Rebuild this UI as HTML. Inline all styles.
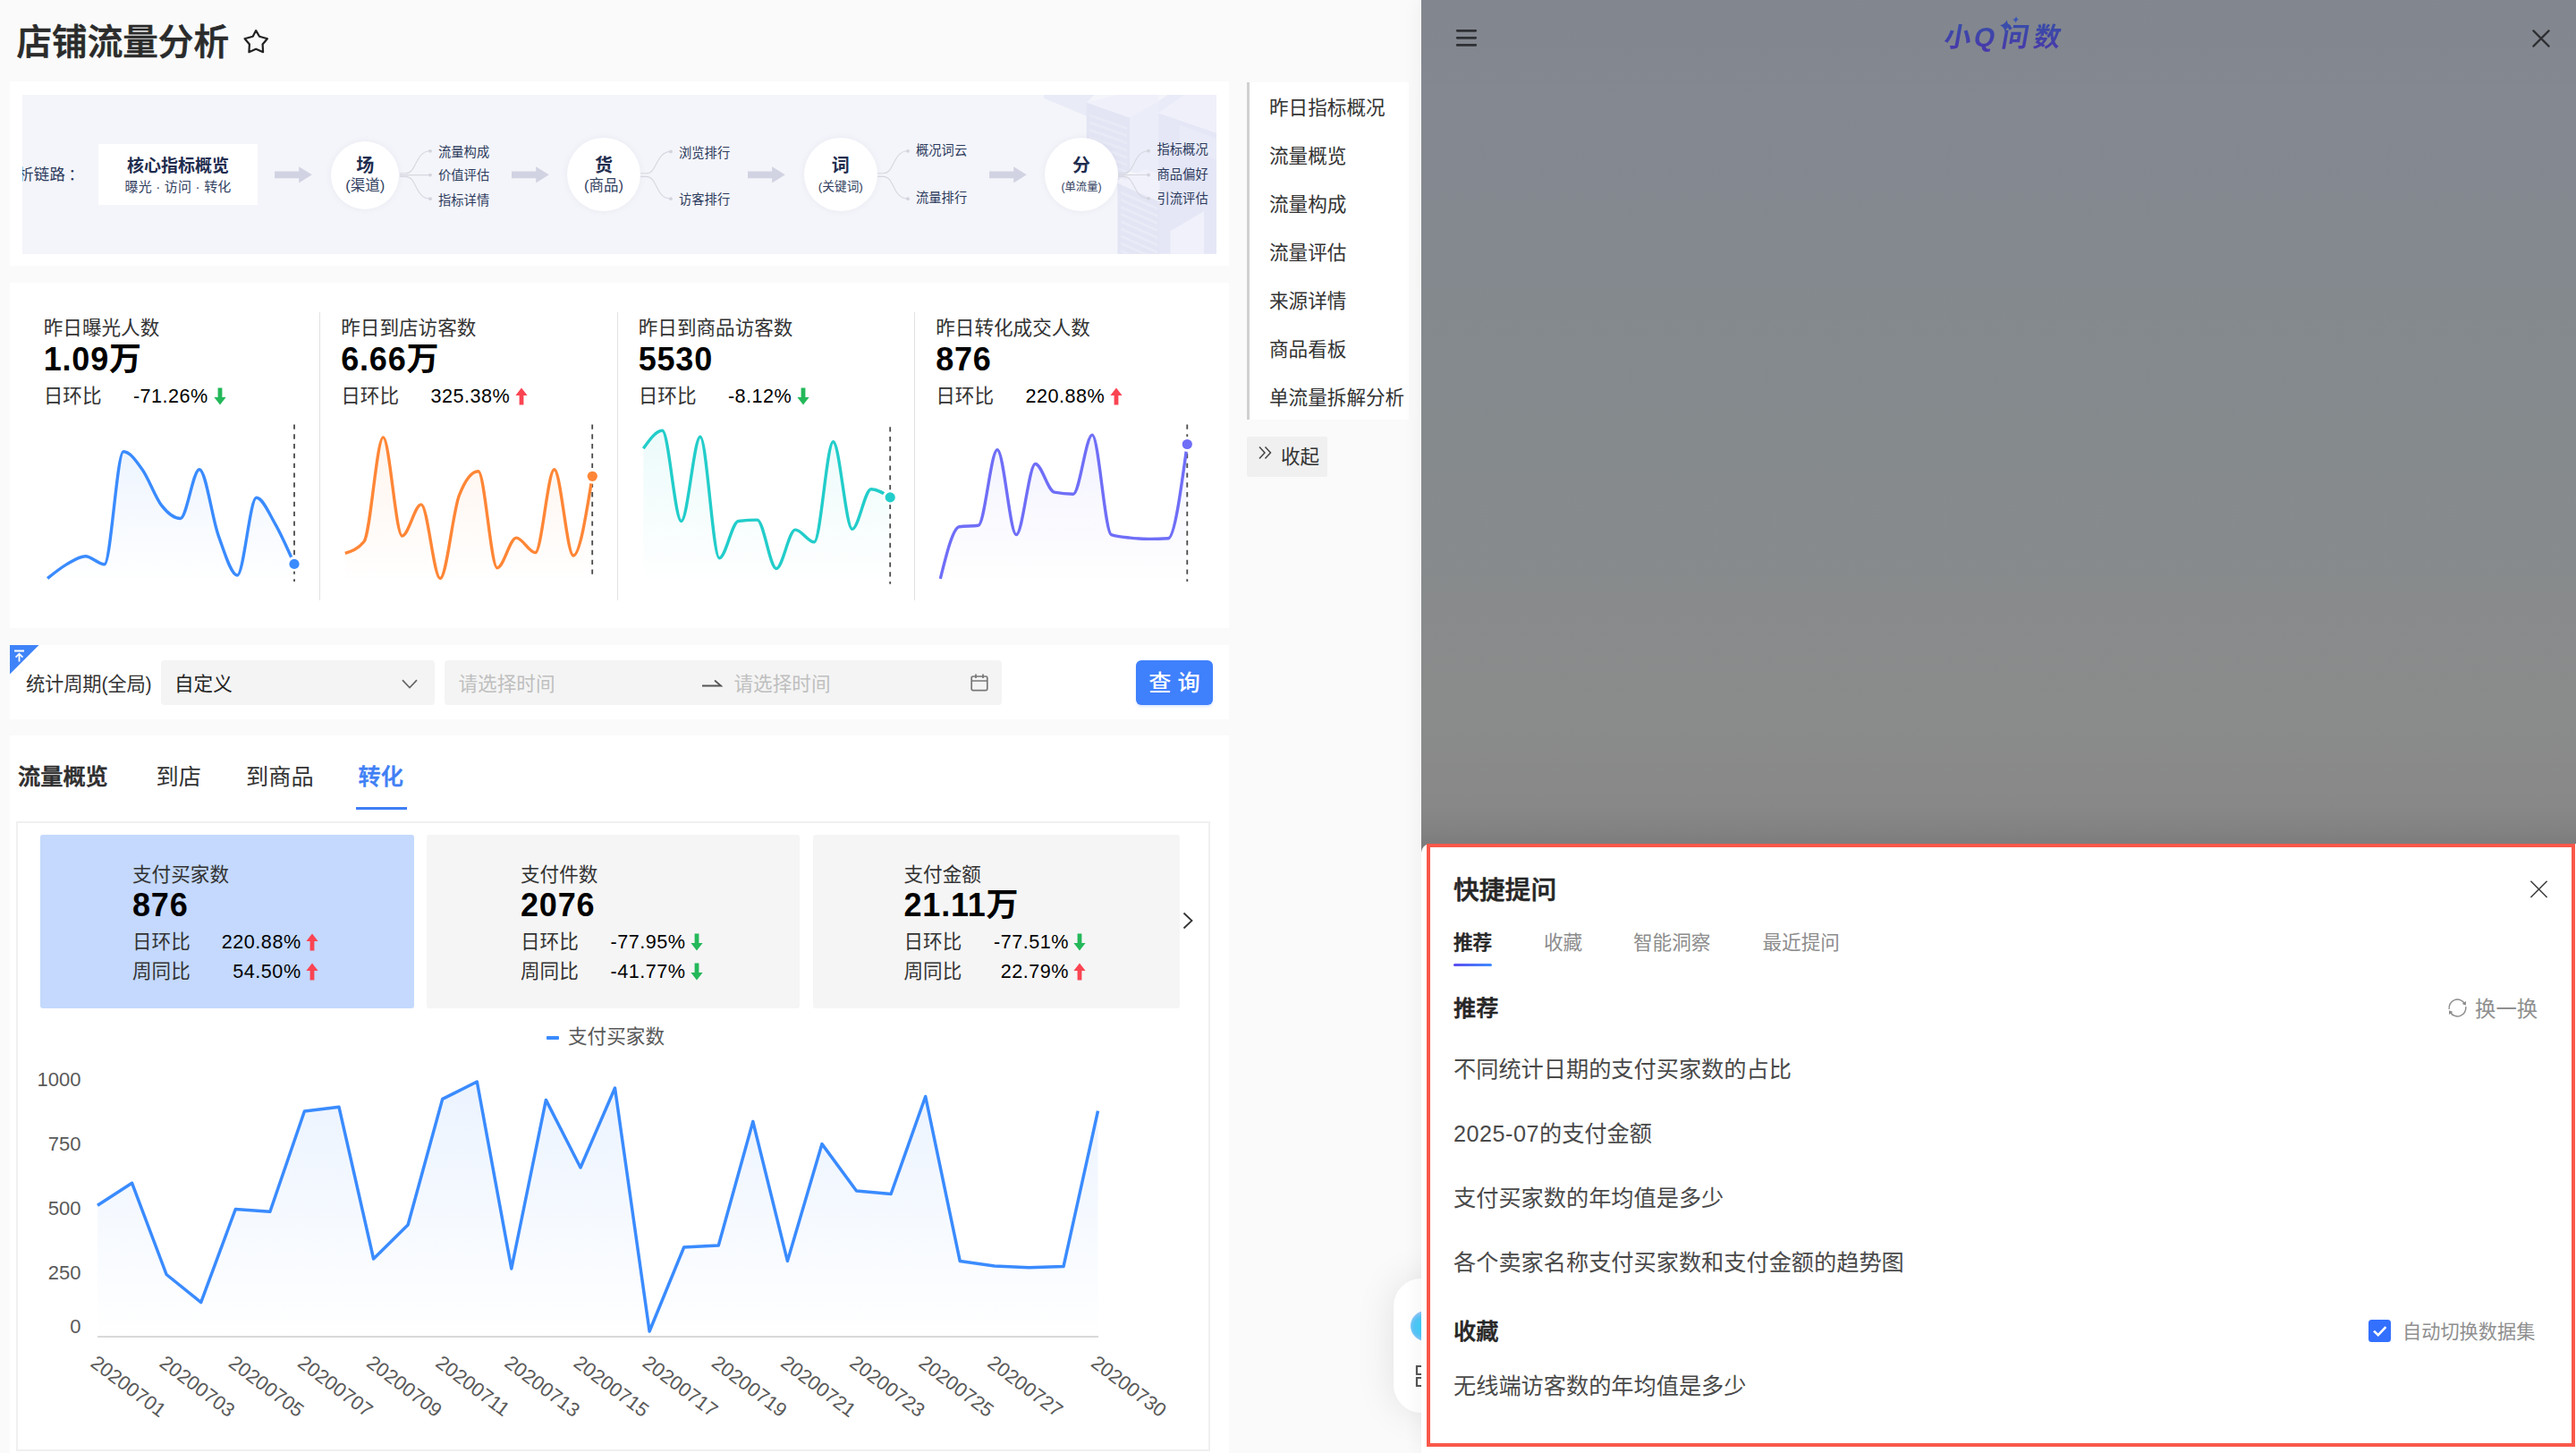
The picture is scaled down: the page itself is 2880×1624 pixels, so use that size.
<!DOCTYPE html>
<html lang="zh-CN"><head><meta charset="utf-8"><title>店铺流量分析</title>
<style>
*{box-sizing:border-box;margin:0;padding:0}
html,body{width:2880px;height:1624px;overflow:hidden;background:#fafafa}
body{position:relative;font-family:"Liberation Sans","Noto Sans CJK SC",sans-serif;color:#333;font-size:21.6px}
.abs,.card,.kpi,.mc,.bc,.ba,.bb,.bl{position:absolute}
.card{background:#fff}
h1{position:absolute;left:18.5px;top:19px;font-size:39.6px;font-weight:500;-webkit-text-stroke:0.7px #2b2b2b;color:#2b2b2b;line-height:56px;letter-spacing:0px;white-space:nowrap}
/* banner */
#banner{position:absolute;left:25px;top:106px;width:1335px;height:177.5px;background:#f4f5fa;overflow:hidden}
#banner > *{position:absolute}
.bt0{left:-57.5px;top:77px;font-size:17.4px;color:#2c3a5c;line-height:24px;white-space:nowrap;letter-spacing:0.2px}
.bbox{left:85px;top:55px;width:178px;height:68px;background:#fff;text-align:center;color:#1f2d4f}
.bbox b{display:block;font-size:19px;line-height:24px;margin-top:12.5px;font-weight:700}
.bbox span{display:block;font-size:15px;line-height:20px;margin-top:1px;color:#33415f;letter-spacing:0.2px}
.ba{top:79.7px}
.bc{border-radius:50%;background:#fff;box-shadow:0 0 7px rgba(120,125,170,0.09)}
.bct{width:100px;text-align:center;color:#1f2d4f;white-space:nowrap}
.bct b{display:block;font-size:20px;line-height:26px;font-weight:700}
.bct span{display:block;line-height:22px;color:#33415f}
.bl{font-size:14.3px;line-height:22px;color:#2c3a5c;white-space:nowrap}
/* kpi */
.kpi{top:349px;width:320px;margin-left:-0.8px}
.kt{font-size:21.6px;line-height:30px;color:#333;margin-top:3px}
.kv{font-size:36px;line-height:36px;font-weight:700;color:#000;margin-top:2.2px;letter-spacing:0.8px}
.kr{margin-top:8px;line-height:30px;white-space:nowrap;position:relative;height:30px}
.kl{color:#333}
.kp{position:absolute;left:100.2px;color:#000;letter-spacing:0.5px}
.kp .ar{display:inline-block;vertical-align:top;margin-left:6px;margin-top:5px}
.vd{position:absolute;top:349px;width:1.3px;height:322px;background:#e2e2e2}
/* filter */
.sel{position:absolute;top:738px;height:50px;background:#f4f4f4;border-radius:4px}
/* tabs */
.tab{position:absolute;top:848.6px;font-size:25.2px;line-height:38px;color:#333;white-space:nowrap}
/* metric cards */
.mc{top:933px;height:194px;border-radius:3px}
.mi{position:absolute;top:0;width:230px}
.mt{font-size:21.6px;line-height:30px;margin-top:30px;color:#333}
.mv{font-size:36px;line-height:36px;font-weight:700;color:#000;margin-top:1px;letter-spacing:0.8px}
.mr{position:relative;height:32.4px;line-height:32.4px;white-space:nowrap}
.mv + .mr{margin-top:7.3px}
.ml{color:#333}
.mp{position:absolute;left:0;text-align:right;color:#000;letter-spacing:0.5px}
.ma{position:absolute;top:6px;line-height:0}
.ax{font-size:22px;fill:#595959;font-family:"Liberation Sans",sans-serif}
/* nav */
.nav{position:absolute;left:1397px;top:92px;width:178px;height:377px;background:#fff}
.nav div{height:54px;line-height:54px;padding-left:22px;position:relative;top:2.3px;font-size:21.6px;color:#333;white-space:nowrap}
/* right */
#rp{position:absolute;left:1589px;top:0;width:1291px;height:1624px;box-shadow:-6px 0 16px rgba(0,0,0,0.035);background:linear-gradient(180deg,#82868e 0px,#838891 110px,#858a8d 480px,#8a8b8b 800px,#888889 900px,#818182 932px,#7c7c7d 943px,#7c7c7d 100%);}
#sheet{position:absolute;left:1589px;top:943px;width:1291px;height:681px;background:#fff;border-radius:10px 0 0 0}
#red{position:absolute;left:1595px;top:942.6px;width:1284px;height:674.4px;border:4.3px solid #f9584a}
.st{position:absolute;white-space:nowrap}
.li{position:absolute;left:1625px;font-size:25.2px;line-height:36px;color:#4a4a4a;white-space:nowrap}
</style></head><body>

<h1>店铺流量分析</h1>
<svg class="abs" style="left:271px;top:30px" width="32" height="32" viewBox="0 0 32 32"><path d="M15.2 4.1 L19 10.8 L27.9 13.2 L22.6 19.5 L23.1 28.2 L15.2 24.8 L7.4 28.2 L7.9 19.5 L2.6 13.2 L11.7 10.8 Z" fill="none" stroke="#222" stroke-width="2.2" stroke-linejoin="round"/></svg>

<!-- banner card -->
<div class="card" style="left:11px;top:91px;width:1363px;height:206px"></div>
<div id="banner">
<svg style="left:1140px;top:0" width="195" height="178" viewBox="0 0 195 178"><polygon points="2.0,-0.1 58.2,-0.1 50.4,8.4 50.4,24.1 2.0,3.8" fill="#e9ebf7"/><polygon points="49.7,8.4 98.1,25.4 98.1,85.6 84.4,96.0 49.7,85.6" fill="#e3e5f4"/><polygon points="50.4,8.4 84.4,-0.1 130.2,-0.1 130.2,7.1 98.1,25.4" fill="#eff0fa"/><polygon points="98.1,25.4 130.2,7.1 130.2,93.4 98.1,85.6" fill="#ebedf8"/><polygon points="130.2,20.2 194.9,42.4 194.9,177.8 130.2,177.8" fill="#e5e7f6"/><polygon points="130.2,20.2 159.0,-0.1 194.9,-0.1 194.9,42.4" fill="#eff0fa"/><polygon points="130.2,7.1 140.7,-0.1 159.0,-0.1 130.2,20.2" fill="#e9ebf8"/><polygon points="84.4,98.6 131.5,119.6 131.5,177.8 84.4,177.8" fill="#e3e5f4"/><polygon points="84.4,98.6 115.8,82.9 131.5,89.5 131.5,119.6" fill="#f0f1fa"/><polygon points="143.3,152.3 181.2,130.0 181.2,177.8 143.3,177.8" fill="#f0f1fa"/><polygon points="153.7,33.2 194.9,48.9 194.9,72.5 153.7,56.8" fill="#e9ebf8"/><g opacity="0.9"><polygon points="88.3,107.8 128.9,125.8 128.9,128.7 88.3,110.7" fill="#eaecf8"/><polygon points="88.3,115.9 128.9,134.0 128.9,136.8 88.3,118.8" fill="#eaecf8"/><polygon points="88.3,124.0 128.9,142.1 128.9,144.9 88.3,126.9" fill="#eaecf8"/><polygon points="88.3,132.1 128.9,150.2 128.9,153.1 88.3,135.0" fill="#eaecf8"/><polygon points="88.3,140.2 128.9,158.3 128.9,161.2 88.3,143.1" fill="#eaecf8"/><polygon points="88.3,148.3 128.9,166.4 128.9,169.3 88.3,151.2" fill="#eaecf8"/><polygon points="88.3,156.5 128.9,174.5 128.9,177.4 88.3,159.3" fill="#eaecf8"/><polygon points="88.3,164.6 128.9,182.6 128.9,185.5 88.3,167.4" fill="#eaecf8"/><polygon points="88.3,172.7 128.9,190.7 128.9,193.6 88.3,175.6" fill="#eaecf8"/><polygon points="53.0,21.5 94.9,36.1 94.9,39.0 53.0,24.3" fill="#e9ebf7"/><polygon points="53.0,29.6 94.9,44.2 94.9,47.1 53.0,32.5" fill="#e9ebf7"/><polygon points="53.0,37.7 94.9,52.3 94.9,55.2 53.0,40.6" fill="#e9ebf7"/><polygon points="53.0,45.8 94.9,60.4 94.9,63.3 53.0,48.7" fill="#e9ebf7"/><polygon points="53.0,53.9 94.9,68.6 94.9,71.4 53.0,56.8" fill="#e9ebf7"/><polygon points="53.0,62.0 94.9,76.7 94.9,79.5 53.0,64.9" fill="#e9ebf7"/><polygon points="53.0,70.1 94.9,84.8 94.9,87.7 53.0,73.0" fill="#e9ebf7"/><polygon points="53.0,78.2 94.9,92.9 94.9,95.8 53.0,81.1" fill="#e9ebf7"/></g></svg>
<div class="bt0">流量分析链路<span style="margin-left:3.4px">：</span></div>
<div class="bbox"><b>核心指标概览</b><span>曝光 · 访问 · 转化</span></div>
<svg class="ba" style="left:282px" width="42" height="19" viewBox="0 0 42 19"><path d="M0 5.4 H27.2 V0.2 L41.8 9.3 L27.2 18.4 V13.2 H0 Z" fill="#d2d3e2"/></svg>
<div class="bc" style="left:345.0px;top:52.1px;width:76.4px;height:76.4px"></div><div class="bct" style="left:333.2px;top:66.2px"><b>场</b></div><div class="bct" style="left:333.2px;top:90.4px;font-size:16.5px"><span>(渠道)</span></div>
<svg class="bb" style="left:422px;top:44px" width="40" height="92" viewBox="0 0 40 92"><path d="M0 43.800000000000004 H6.8 C19.0 43.800000000000004 17.0 18.80000000000001 34 18.80000000000001" fill="none" stroke="#d6d7df" stroke-width="1.1"/><circle cx="34" cy="18.80000000000001" r="1.9" fill="#d3d4dd"/><path d="M0 45.6 H6.8 C19.0 45.6 17.0 45.599999999999994 34 45.599999999999994" fill="none" stroke="#d6d7df" stroke-width="1.1"/><circle cx="34" cy="45.599999999999994" r="1.9" fill="#d3d4dd"/><path d="M0 47.4 H6.8 C19.0 47.4 17.0 72.19999999999999 34 72.19999999999999" fill="none" stroke="#d6d7df" stroke-width="1.1"/><circle cx="34" cy="72.19999999999999" r="1.9" fill="#d3d4dd"/></svg>
<div class="bl" style="left:465px;top:52.5px">流量构成</div><div class="bl" style="left:465px;top:79px">价值评估</div><div class="bl" style="left:465px;top:106.5px">指标详情</div>
<svg class="ba" style="left:547px" width="42" height="19" viewBox="0 0 42 19"><path d="M0 5.4 H27.2 V0.2 L41.8 9.3 L27.2 18.4 V13.2 H0 Z" fill="#d2d3e2"/></svg>
<div class="bc" style="left:609.2px;top:48.2px;width:81.6px;height:81.6px"></div><div class="bct" style="left:600.0px;top:66.2px"><b>货</b></div><div class="bct" style="left:600.0px;top:90.4px;font-size:16.5px"><span>(商品)</span></div>
<svg class="bb" style="left:691px;top:44px" width="40" height="92" viewBox="0 0 40 92"><path d="M0 43.800000000000004 H6.8 C19.0 43.800000000000004 17.0 19.400000000000006 34 19.400000000000006" fill="none" stroke="#d6d7df" stroke-width="1.1"/><circle cx="34" cy="19.400000000000006" r="1.9" fill="#d3d4dd"/><path d="M0 47.4 H6.8 C19.0 47.4 17.0 72.19999999999999 34 72.19999999999999" fill="none" stroke="#d6d7df" stroke-width="1.1"/><circle cx="34" cy="72.19999999999999" r="1.9" fill="#d3d4dd"/></svg>
<div class="bl" style="left:734px;top:53.80000000000001px">浏览排行</div><div class="bl" style="left:734px;top:105.69999999999999px">访客排行</div>
<svg class="ba" style="left:811px" width="42" height="19" viewBox="0 0 42 19"><path d="M0 5.4 H27.2 V0.2 L41.8 9.3 L27.2 18.4 V13.2 H0 Z" fill="#d2d3e2"/></svg>
<div class="bc" style="left:874.0px;top:48.2px;width:81.6px;height:81.6px"></div><div class="bct" style="left:864.8px;top:66.2px"><b>词</b></div><div class="bct" style="left:864.8px;top:92.4px;font-size:13.7px"><span>(关键词)</span></div>
<svg class="bb" style="left:956px;top:44px" width="40" height="92" viewBox="0 0 40 92"><path d="M0 43.800000000000004 H6.8 C19.0 43.800000000000004 17.0 18.80000000000001 34 18.80000000000001" fill="none" stroke="#d6d7df" stroke-width="1.1"/><circle cx="34" cy="18.80000000000001" r="1.9" fill="#d3d4dd"/><path d="M0 47.4 H6.8 C19.0 47.4 17.0 72.19999999999999 34 72.19999999999999" fill="none" stroke="#d6d7df" stroke-width="1.1"/><circle cx="34" cy="72.19999999999999" r="1.9" fill="#d3d4dd"/></svg>
<div class="bl" style="left:999px;top:50.5px">概况词云</div><div class="bl" style="left:999px;top:104.30000000000001px">流量排行</div>
<svg class="ba" style="left:1081px" width="42" height="19" viewBox="0 0 42 19"><path d="M0 5.4 H27.2 V0.2 L41.8 9.3 L27.2 18.4 V13.2 H0 Z" fill="#d2d3e2"/></svg>
<div class="bc" style="left:1143.2px;top:48.2px;width:81.6px;height:81.6px"></div><div class="bct" style="left:1134.0px;top:66.2px"><b>分</b></div><div class="bct" style="left:1134.0px;top:91.8px;font-size:12.3px"><span>(单流量)</span></div>
<svg class="bb" style="left:1225px;top:44px" width="40" height="92" viewBox="0 0 40 92"><path d="M0 43.800000000000004 H6.8 C19.0 43.800000000000004 17.0 18.69999999999999 34 18.69999999999999" fill="none" stroke="#d6d7df" stroke-width="1.1"/><circle cx="34" cy="18.69999999999999" r="1.9" fill="#d3d4dd"/><path d="M0 45.6 H6.8 C19.0 45.6 17.0 45.5 34 45.5" fill="none" stroke="#d6d7df" stroke-width="1.1"/><circle cx="34" cy="45.5" r="1.9" fill="#d3d4dd"/><path d="M0 47.4 H6.8 C19.0 47.4 17.0 71.80000000000001 34 71.80000000000001" fill="none" stroke="#d6d7df" stroke-width="1.1"/><circle cx="34" cy="71.80000000000001" r="1.9" fill="#d3d4dd"/></svg>
<div class="bl" style="left:1268.5px;top:50.400000000000006px">指标概况</div><div class="bl" style="left:1268.5px;top:77.9px">商品偏好</div><div class="bl" style="left:1268.5px;top:104.6px">引流评估</div>
</div>

<!-- kpi card -->
<div class="card" style="left:11px;top:316px;width:1363px;height:386px"></div>
<div class="kpi" style="left:49.5px"><div class="kt">昨日曝光人数</div><div class="kv">1.09万</div><div class="kr"><span class="kl">日环比</span><span class="kp">-71.26%<svg class="ar" width="14" height="20" viewBox="0 0 14 20"><path d="M7 19.5 L13.6 11 H9.4 V0.5 H4.6 V11 H0.4 Z" fill="#24b85a"/></svg></span></div></div>
<div class="kpi" style="left:382px"><div class="kt">昨日到店访客数</div><div class="kv">6.66万</div><div class="kr"><span class="kl">日环比</span><span class="kp">325.38%<svg class="ar" width="14" height="20" viewBox="0 0 14 20"><path d="M7 0.5 L13.6 9 H9.4 V19.5 H4.6 V9 H0.4 Z" fill="#fa4452"/></svg></span></div></div>
<div class="kpi" style="left:714.5px"><div class="kt">昨日到商品访客数</div><div class="kv">5530</div><div class="kr"><span class="kl">日环比</span><span class="kp">-8.12%<svg class="ar" width="14" height="20" viewBox="0 0 14 20"><path d="M7 19.5 L13.6 11 H9.4 V0.5 H4.6 V11 H0.4 Z" fill="#24b85a"/></svg></span></div></div>
<div class="kpi" style="left:1047px"><div class="kt">昨日转化成交人数</div><div class="kv">876</div><div class="kr"><span class="kl">日环比</span><span class="kp">220.88%<svg class="ar" width="14" height="20" viewBox="0 0 14 20"><path d="M7 0.5 L13.6 9 H9.4 V19.5 H4.6 V9 H0.4 Z" fill="#fa4452"/></svg></span></div></div>
<div class="vd" style="left:357px"></div><div class="vd" style="left:689.6px"></div><div class="vd" style="left:1022px"></div>
<svg class="abs" style="left:0;top:0" width="1380" height="700" viewBox="0 0 1380 700">
<linearGradient id="sg0" x1="0" y1="505" x2="0" y2="652" gradientUnits="userSpaceOnUse"><stop offset="0" stop-color="rgba(58,139,255,0.085)"/><stop offset="1" stop-color="rgba(58,139,255,0)"/></linearGradient>
<path d="M53.1 646.5C60.2 640.8 67.2 635.1 74.3 630.9C81.4 626.8 88.5 621.7 95.5 621.7C102.6 621.7 109.7 630.7 116.8 630.7C123.8 630.7 130.9 504.7 138.0 504.7C145.1 504.7 152.1 515.0 159.2 525.0C166.3 534.9 173.4 555.5 180.4 564.6C187.5 573.7 194.6 579.5 201.7 579.5C208.7 579.5 215.8 524.7 222.9 524.7C230.0 524.7 237.0 578.6 244.1 598.3C251.2 618.0 258.3 643.0 265.3 643.0C272.4 643.0 279.5 556.3 286.6 556.3C293.6 556.3 300.7 573.6 307.8 585.9C314.9 598.3 321.9 614.3 329.0 630.4L329.0 652 L53.1 652 Z" fill="url(#sg0)"/>
<line x1="329" y1="474.45" x2="329" y2="650" stroke="#4a4a4a" stroke-width="1.8" stroke-dasharray="5.4 5.4"/>
<path d="M53.1 646.5C60.2 640.8 67.2 635.1 74.3 630.9C81.4 626.8 88.5 621.7 95.5 621.7C102.6 621.7 109.7 630.7 116.8 630.7C123.8 630.7 130.9 504.7 138.0 504.7C145.1 504.7 152.1 515.0 159.2 525.0C166.3 534.9 173.4 555.5 180.4 564.6C187.5 573.7 194.6 579.5 201.7 579.5C208.7 579.5 215.8 524.7 222.9 524.7C230.0 524.7 237.0 578.6 244.1 598.3C251.2 618.0 258.3 643.0 265.3 643.0C272.4 643.0 279.5 556.3 286.6 556.3C293.6 556.3 300.7 573.6 307.8 585.9C314.9 598.3 321.9 614.3 329.0 630.4" fill="none" stroke="#3a8bff" stroke-width="3.4" stroke-linecap="butt" stroke-linejoin="round"/>
<circle cx="329.0" cy="630.4" r="8.4" fill="#fff"/><circle cx="329.0" cy="630.4" r="5.6" fill="#3a8bff"/>
<linearGradient id="sg1" x1="0" y1="489" x2="0" y2="652" gradientUnits="userSpaceOnUse"><stop offset="0" stop-color="rgba(255,134,54,0.085)"/><stop offset="1" stop-color="rgba(255,134,54,0)"/></linearGradient>
<path d="M385.8 618.3C392.9 616.1 400.0 613.9 407.1 605.2C414.2 596.5 421.3 488.9 428.4 488.9C435.4 488.9 442.5 599.0 449.6 599.0C456.7 599.0 463.8 563.9 470.9 563.9C478.0 563.9 485.1 646.5 492.1 646.5C499.2 646.5 506.3 571.5 513.4 553.6C520.5 535.7 527.6 526.8 534.7 526.8C541.8 526.8 548.9 634.8 555.9 634.8C563.0 634.8 570.1 601.1 577.2 601.1C584.3 601.1 591.4 617.6 598.5 617.6C605.6 617.6 612.6 524.7 619.7 524.7C626.8 524.7 633.9 621.0 641.0 621.0C648.1 621.0 655.2 576.6 662.3 532.3L662.3 652 L385.8 652 Z" fill="url(#sg1)"/>
<line x1="662.2" y1="474.45" x2="662.2" y2="643" stroke="#4a4a4a" stroke-width="1.8" stroke-dasharray="5.4 5.4"/>
<path d="M385.8 618.3C392.9 616.1 400.0 613.9 407.1 605.2C414.2 596.5 421.3 488.9 428.4 488.9C435.4 488.9 442.5 599.0 449.6 599.0C456.7 599.0 463.8 563.9 470.9 563.9C478.0 563.9 485.1 646.5 492.1 646.5C499.2 646.5 506.3 571.5 513.4 553.6C520.5 535.7 527.6 526.8 534.7 526.8C541.8 526.8 548.9 634.8 555.9 634.8C563.0 634.8 570.1 601.1 577.2 601.1C584.3 601.1 591.4 617.6 598.5 617.6C605.6 617.6 612.6 524.7 619.7 524.7C626.8 524.7 633.9 621.0 641.0 621.0C648.1 621.0 655.2 576.6 662.3 532.3" fill="none" stroke="#ff8636" stroke-width="3.4" stroke-linecap="butt" stroke-linejoin="round"/>
<circle cx="662.3" cy="532.3" r="8.4" fill="#fff"/><circle cx="662.3" cy="532.3" r="5.6" fill="#ff8636"/>
<linearGradient id="sg2" x1="0" y1="481" x2="0" y2="652" gradientUnits="userSpaceOnUse"><stop offset="0" stop-color="rgba(34,205,202,0.085)"/><stop offset="1" stop-color="rgba(34,205,202,0)"/></linearGradient>
<path d="M719.3 501.3C726.3 491.3 733.4 481.3 740.5 481.3C747.6 481.3 754.6 582.5 761.7 582.5C768.8 582.5 775.9 488.2 782.9 488.2C790.0 488.2 797.1 623.8 804.2 623.8C811.3 623.8 818.3 583.4 825.4 582.5C832.5 581.6 839.6 581.1 846.6 581.1C853.7 581.1 860.8 635.5 867.9 635.5C874.9 635.5 882.0 592.1 889.1 592.1C896.2 592.1 903.2 605.9 910.3 605.9C917.4 605.9 924.5 493.7 931.5 493.7C938.6 493.7 945.7 591.4 952.8 591.4C959.8 591.4 966.9 546.7 974.0 546.7C981.1 546.7 988.1 551.3 995.2 555.9L995.2 652 L719.3 652 Z" fill="url(#sg2)"/>
<line x1="995.2" y1="477.2" x2="995.2" y2="652.8" stroke="#4a4a4a" stroke-width="1.8" stroke-dasharray="5.4 5.4"/>
<path d="M719.3 501.3C726.3 491.3 733.4 481.3 740.5 481.3C747.6 481.3 754.6 582.5 761.7 582.5C768.8 582.5 775.9 488.2 782.9 488.2C790.0 488.2 797.1 623.8 804.2 623.8C811.3 623.8 818.3 583.4 825.4 582.5C832.5 581.6 839.6 581.1 846.6 581.1C853.7 581.1 860.8 635.5 867.9 635.5C874.9 635.5 882.0 592.1 889.1 592.1C896.2 592.1 903.2 605.9 910.3 605.9C917.4 605.9 924.5 493.7 931.5 493.7C938.6 493.7 945.7 591.4 952.8 591.4C959.8 591.4 966.9 546.7 974.0 546.7C981.1 546.7 988.1 551.3 995.2 555.9" fill="none" stroke="#22cdca" stroke-width="3.4" stroke-linecap="butt" stroke-linejoin="round"/>
<circle cx="995.2" cy="555.9" r="8.4" fill="#fff"/><circle cx="995.2" cy="555.9" r="5.6" fill="#22cdca"/>
<linearGradient id="sg3" x1="0" y1="486" x2="0" y2="652" gradientUnits="userSpaceOnUse"><stop offset="0" stop-color="rgba(111,110,247,0.085)"/><stop offset="1" stop-color="rgba(111,110,247,0)"/></linearGradient>
<path d="M1051.3 646.9C1058.4 618.3 1065.5 589.6 1072.6 588.7C1079.6 587.8 1086.7 588.2 1093.8 587.3C1100.9 586.4 1107.9 502.7 1115.0 502.7C1122.1 502.7 1129.2 597.6 1136.2 597.6C1143.3 597.6 1150.4 518.5 1157.5 518.5C1164.5 518.5 1171.6 548.8 1178.7 550.1C1185.8 551.5 1192.8 552.2 1199.9 552.2C1207.0 552.2 1214.1 486.1 1221.1 486.1C1228.2 486.1 1235.3 595.3 1242.4 597.6C1249.4 599.9 1256.5 600.3 1263.6 601.1C1270.7 601.9 1277.8 602.4 1284.8 602.4C1291.9 602.4 1299.0 602.2 1306.1 601.8C1313.1 601.3 1320.2 548.9 1327.3 496.5L1327.3 652 L1051.3 652 Z" fill="url(#sg3)"/>
<line x1="1327.3" y1="474.45" x2="1327.3" y2="650" stroke="#4a4a4a" stroke-width="1.8" stroke-dasharray="5.4 5.4"/>
<path d="M1051.3 646.9C1058.4 618.3 1065.5 589.6 1072.6 588.7C1079.6 587.8 1086.7 588.2 1093.8 587.3C1100.9 586.4 1107.9 502.7 1115.0 502.7C1122.1 502.7 1129.2 597.6 1136.2 597.6C1143.3 597.6 1150.4 518.5 1157.5 518.5C1164.5 518.5 1171.6 548.8 1178.7 550.1C1185.8 551.5 1192.8 552.2 1199.9 552.2C1207.0 552.2 1214.1 486.1 1221.1 486.1C1228.2 486.1 1235.3 595.3 1242.4 597.6C1249.4 599.9 1256.5 600.3 1263.6 601.1C1270.7 601.9 1277.8 602.4 1284.8 602.4C1291.9 602.4 1299.0 602.2 1306.1 601.8C1313.1 601.3 1320.2 548.9 1327.3 496.5" fill="none" stroke="#6f6ef7" stroke-width="3.4" stroke-linecap="butt" stroke-linejoin="round"/>
<circle cx="1327.3" cy="496.5" r="8.4" fill="#fff"/><circle cx="1327.3" cy="496.5" r="5.6" fill="#6f6ef7"/>
</svg>

<!-- filter bar -->
<div class="card" style="left:11px;top:721px;width:1363px;height:83px"></div>
<svg class="abs" style="left:11px;top:721px" width="34" height="34" viewBox="0 0 34 34"><path d="M0 0 H32.5 L0 32.5 Z" fill="#3f83f8"/><path d="M5 6.5 H16 M10.5 18.5 V10 M6.6 13.6 L10.5 9.7 L14.4 13.6" fill="none" stroke="#fff" stroke-width="1.8"/></svg>
<div class="st" style="left:29px;top:750px;line-height:30px;color:#333;font-size:21.3px;letter-spacing:-0.2px">统计周期(全局)</div>
<div class="sel" style="left:180px;width:306px"><div class="st" style="left:15px;top:11.7px;line-height:30px;color:#222">自定义</div>
<svg class="abs" style="left:268px;top:20px" width="20" height="14" viewBox="0 0 20 14"><path d="M2 2.2 L10 10.6 L18 2.2" fill="none" stroke="#666" stroke-width="1.7"/></svg></div>
<div class="sel" style="left:497px;width:623px"><div class="st" style="left:15.5px;top:11.7px;line-height:30px;color:#bfbfbf">请选择时间</div><div class="st" style="left:323.5px;top:11.7px;line-height:30px;color:#bfbfbf">请选择时间</div>
<svg class="abs" style="left:287px;top:18px" width="24" height="14" viewBox="0 0 24 14"><path d="M1 10.5 H22 L15 4.5" fill="none" stroke="#555" stroke-width="1.8"/></svg>
<svg class="abs" style="left:588px;top:14px" width="20" height="22" viewBox="0 0 20 22"><rect x="1.2" y="4" width="17.6" height="15.6" rx="1.6" fill="none" stroke="#777" stroke-width="1.7"/><path d="M1.2 9 H18.8 M6 1.5 V6 M14 1.5 V6" stroke="#777" stroke-width="1.7" fill="none"/></svg></div>
<div class="abs" style="left:1270px;top:738px;width:86px;height:50px;background:#3f80fc;border-radius:6px;color:#fff;font-size:25.2px;line-height:50px;text-align:center;font-weight:500;box-shadow:0 2px 3px rgba(60,130,246,0.18)">查 询</div>

<!-- tabs card -->
<div class="card" style="left:11px;top:822px;width:1363px;height:802px"></div>
<div class="tab" style="left:20px;font-weight:500;-webkit-text-stroke:0.6px #2e2e2e;color:#2e2e2e">流量概览</div>
<div class="tab" style="left:174.5px">到店</div>
<div class="tab" style="left:275px">到商品</div>
<div class="tab" style="left:400.5px;color:#3f7ff5;font-weight:500;-webkit-text-stroke:0.5px #3f7ff5">转化</div>
<div class="abs" style="left:398px;top:901.5px;width:57px;height:3.6px;background:#3f7ff5"></div>
<div class="abs" style="left:18px;top:917.5px;width:1334.5px;height:704px;border:2px solid #f0f0f0;background:#fff"></div>
<div class="mc" style="left:44.5px;width:418.5px;background:#c4d9fd"><div class="mi" style="left:103.5px"><div class="mt">支付买家数</div><div class="mv">876</div><div class="mr"><span class="ml">日环比</span><span class="mp" style="width:188.6px">220.88%</span><span class="ma" style="left:194.0px"><svg class="ar" width="14" height="20" viewBox="0 0 14 20"><path d="M7 0.5 L13.6 9 H9.4 V19.5 H4.6 V9 H0.4 Z" fill="#fa4452"/></svg></span></div><div class="mr"><span class="ml">周同比</span><span class="mp" style="width:188.6px">54.50%</span><span class="ma" style="left:194.0px"><svg class="ar" width="14" height="20" viewBox="0 0 14 20"><path d="M7 0.5 L13.6 9 H9.4 V19.5 H4.6 V9 H0.4 Z" fill="#fa4452"/></svg></span></div></div></div>
<div class="mc" style="left:477px;width:417px;background:#f5f5f5"><div class="mi" style="left:105px"><div class="mt">支付件数</div><div class="mv">2076</div><div class="mr"><span class="ml">日环比</span><span class="mp" style="width:184.4px">-77.95%</span><span class="ma" style="left:189.8px"><svg class="ar" width="14" height="20" viewBox="0 0 14 20"><path d="M7 19.5 L13.6 11 H9.4 V0.5 H4.6 V11 H0.4 Z" fill="#24b85a"/></svg></span></div><div class="mr"><span class="ml">周同比</span><span class="mp" style="width:184.4px">-41.77%</span><span class="ma" style="left:189.8px"><svg class="ar" width="14" height="20" viewBox="0 0 14 20"><path d="M7 19.5 L13.6 11 H9.4 V0.5 H4.6 V11 H0.4 Z" fill="#24b85a"/></svg></span></div></div></div>
<div class="mc" style="left:909px;width:410px;background:#f5f5f5"><div class="mi" style="left:101.5px"><div class="mt">支付金额</div><div class="mv">21.11万</div><div class="mr"><span class="ml">日环比</span><span class="mp" style="width:184.4px">-77.51%</span><span class="ma" style="left:189.8px"><svg class="ar" width="14" height="20" viewBox="0 0 14 20"><path d="M7 19.5 L13.6 11 H9.4 V0.5 H4.6 V11 H0.4 Z" fill="#24b85a"/></svg></span></div><div class="mr"><span class="ml">周同比</span><span class="mp" style="width:184.4px">22.79%</span><span class="ma" style="left:189.8px"><svg class="ar" width="14" height="20" viewBox="0 0 14 20"><path d="M7 0.5 L13.6 9 H9.4 V19.5 H4.6 V9 H0.4 Z" fill="#fa4452"/></svg></span></div></div></div>
<svg class="abs" style="left:1320px;top:1018px" width="16" height="22" viewBox="0 0 16 22"><path d="M3.5 2.5 L12.5 11 L3.5 19.5" fill="none" stroke="#333" stroke-width="1.8"/></svg>
<div class="abs" style="left:611px;top:1158.3px;width:14px;height:3.6px;background:#3a8bff;border-radius:1px"></div>
<div class="st" style="left:635px;top:1144px;line-height:30px;color:#595959;font-size:21.6px">支付买家数</div>
<svg class="abs" style="left:0;top:1180px" width="1380" height="444" viewBox="0 1180 1380 444">
<linearGradient id="cg" x1="0" y1="1209" x2="0" y2="1494" gradientUnits="userSpaceOnUse"><stop offset="0" stop-color="rgba(58,139,255,0.10)"/><stop offset="1" stop-color="rgba(58,139,255,0.0)"/></linearGradient>
<path d="M109.0 1347.3 L147.6 1322.3 L186.1 1424.5 L224.7 1455.6 L263.3 1351.5 L301.9 1354.3 L340.4 1242.0 L379.0 1237.3 L417.6 1407.0 L456.1 1369.0 L494.7 1228.4 L533.3 1209.0 L571.8 1418.0 L610.4 1229.4 L649.0 1305.0 L687.5 1216.0 L726.1 1488.0 L764.7 1394.0 L803.3 1392.0 L841.8 1253.5 L880.4 1409.4 L919.0 1278.6 L957.5 1331.0 L996.1 1334.5 L1034.7 1225.5 L1073.2 1409.4 L1111.8 1415.0 L1150.4 1416.7 L1189.0 1415.6 L1227.5 1241.7 L1227.5 1494 L109.0 1494 Z" fill="url(#cg)"/>
<line x1="109" y1="1494" x2="1228" y2="1494" stroke="#d9d9d9" stroke-width="2"/>
<path d="M109.0 1347.3 L147.6 1322.3 L186.1 1424.5 L224.7 1455.6 L263.3 1351.5 L301.9 1354.3 L340.4 1242.0 L379.0 1237.3 L417.6 1407.0 L456.1 1369.0 L494.7 1228.4 L533.3 1209.0 L571.8 1418.0 L610.4 1229.4 L649.0 1305.0 L687.5 1216.0 L726.1 1488.0 L764.7 1394.0 L803.3 1392.0 L841.8 1253.5 L880.4 1409.4 L919.0 1278.6 L957.5 1331.0 L996.1 1334.5 L1034.7 1225.5 L1073.2 1409.4 L1111.8 1415.0 L1150.4 1416.7 L1189.0 1415.6 L1227.5 1241.7" fill="none" stroke="#3a8bff" stroke-width="3.5" stroke-linejoin="round"/>
<text x="90.5" y="1213.8" text-anchor="end" class="ax">1000</text>
<text x="90.5" y="1286.1" text-anchor="end" class="ax">750</text>
<text x="90.5" y="1357.8" text-anchor="end" class="ax">500</text>
<text x="90.5" y="1429.8" text-anchor="end" class="ax">250</text>
<text x="90.5" y="1490.0" text-anchor="end" class="ax">0</text>
<text transform="translate(100.0 1526) rotate(37)" class="ax">20200701</text>
<text transform="translate(177.1 1526) rotate(37)" class="ax">20200703</text>
<text transform="translate(254.3 1526) rotate(37)" class="ax">20200705</text>
<text transform="translate(331.4 1526) rotate(37)" class="ax">20200707</text>
<text transform="translate(408.6 1526) rotate(37)" class="ax">20200709</text>
<text transform="translate(485.7 1526) rotate(37)" class="ax">20200711</text>
<text transform="translate(562.8 1526) rotate(37)" class="ax">20200713</text>
<text transform="translate(640.0 1526) rotate(37)" class="ax">20200715</text>
<text transform="translate(717.1 1526) rotate(37)" class="ax">20200717</text>
<text transform="translate(794.3 1526) rotate(37)" class="ax">20200719</text>
<text transform="translate(871.4 1526) rotate(37)" class="ax">20200721</text>
<text transform="translate(948.5 1526) rotate(37)" class="ax">20200723</text>
<text transform="translate(1025.7 1526) rotate(37)" class="ax">20200725</text>
<text transform="translate(1102.8 1526) rotate(37)" class="ax">20200727</text>
<text transform="translate(1218.5 1526) rotate(37)" class="ax">20200730</text>
</svg>

<!-- right nav -->
<div class="abs" style="left:1394px;top:92px;width:3.6px;height:377px;background:#d0d0d0"></div>
<div class="nav"><div>昨日指标概况</div><div>流量概览</div><div>流量构成</div><div>流量评估</div><div>来源详情</div><div>商品看板</div><div>单流量拆解分析</div></div>
<div class="abs" style="left:1394px;top:488px;width:90px;height:44.5px;background:#f0f0f0;border-radius:2px"></div>
<svg class="abs" style="left:1406px;top:497px" width="18" height="18" viewBox="0 0 18 18"><path d="M2 2.5 L8 9 L2 15.5 M8.5 2.5 L14.5 9 L8.5 15.5" fill="none" stroke="#444" stroke-width="1.5"/></svg>
<div class="st" style="left:1432px;top:496px;line-height:30px;color:#333;font-size:21.6px">收起</div>

<!-- floating pill -->
<div class="abs" style="left:1558px;top:1429px;width:70px;height:150px;border-radius:31px;background:#fff;box-shadow:0 0 44px rgba(0,0,0,0.10)"></div>
<div class="abs" style="left:1577px;top:1465px;width:34px;height:34px;border-radius:50%;background:radial-gradient(circle at 42% 52%,#35d4fb 0%,#56c6f8 42%,#a8c8fa 68%,#dcdcfd 86%,#f4f2ff 100%)"></div>
<svg class="abs" style="left:1581.5px;top:1525px" width="26" height="26" viewBox="0 0 26 26"><path d="M2 2 H12 V11 H2 Z M2 15 H12 V24 H2 Z M15 15 H24 V24 H15 Z" fill="none" stroke="#555" stroke-width="2.2"/></svg>

<!-- right panel -->
<div id="rp"></div>
<svg class="abs" style="left:1626px;top:30px" width="28" height="26" viewBox="0 0 28 26"><path d="M3.2 4.3 H23.8 M3.2 12.35 H23.8 M3.2 20.4 H23.8" stroke="#2e3034" stroke-width="2.7" stroke-linecap="round" fill="none"/></svg>
<svg class="abs" style="left:2829.5px;top:31.5px" width="22" height="22" viewBox="0 0 22 22"><path d="M2.4 2.4 L19.6 19.6 M19.6 2.4 L2.4 19.6" stroke="#2f3033" stroke-width="2.3" stroke-linecap="round" fill="none"/></svg>
<div class="st" id="logo" style="left:2174px;top:21px;font-size:30px;line-height:42px;font-weight:700;letter-spacing:3.2px;transform:skewX(-10deg);color:#4340b0;background:linear-gradient(180deg,#3a4aa8 22%,#4838ab 82%);-webkit-background-clip:text;background-clip:text;-webkit-text-fill-color:transparent">小Q<span style="margin-left:4.5px">问</span><span style="margin-left:2.5px">数</span></div>
<svg class="abs" style="left:2233px;top:16px" width="34" height="26" viewBox="0 0 34 26"><path d="M10.6 6.2 Q11.4 11.6 15.4 13 Q10.6 14.2 8.4 19.6 Q8 14 3 12.2 Q8.6 11.2 10.6 6.2 Z" fill="#3b4dab"/><path d="M21.2 2.4 Q21.6 5 24 5.8 Q21.4 6.6 20.4 9.6 Q20 6.8 17.2 5.8 Q20.2 5.2 21.2 2.4 Z" fill="#3b55b5"/></svg>

<!-- sheet -->
<div id="sheet"></div>
<div id="red"></div>
<div class="st" style="left:1625px;top:974.5px;font-size:28.8px;line-height:40px;font-weight:500;-webkit-text-stroke:0.55px #262626;color:#262626">快捷提问</div>
<svg class="abs" style="left:2828px;top:983px" width="22" height="22" viewBox="0 0 22 22"><path d="M1.4 1.8 L19.6 20 M19.6 1.8 L1.4 20" stroke="#404040" stroke-width="1.6" fill="none"/></svg>
<div class="st" style="left:1625px;top:1039px;line-height:30px;font-weight:500;-webkit-text-stroke:0.55px #262626;color:#262626">推荐</div>
<div class="st" style="left:1726px;top:1039px;line-height:30px;color:#8c8c8c">收藏</div>
<div class="st" style="left:1826px;top:1039px;line-height:30px;color:#8c8c8c">智能洞察</div>
<div class="st" style="left:1970.5px;top:1039px;line-height:30px;color:#8c8c8c">最近提问</div>
<div class="abs" style="left:1625px;top:1076.5px;width:43px;height:3.6px;border-radius:2px;background:linear-gradient(90deg,#5b4df0,#3f8cff)"></div>
<div class="st" style="left:1625px;top:1109px;font-size:25.2px;line-height:36px;font-weight:500;-webkit-text-stroke:0.55px #262626;color:#262626">推荐</div>
<svg class="abs" style="left:2736.2px;top:1114.9px" width="23" height="23" viewBox="0 0 23 23"><path d="M2.19 12.81 A9.4 9.4 0 0 1 19.47 6.52 M20.81 10.19 A9.4 9.4 0 0 1 3.53 16.48" fill="none" stroke="#8c8c8c" stroke-width="1.5"/><path d="M20.85 8.72 L21.04 4.12 L16.63 6.88 Z M2.15 14.28 L1.96 18.88 L6.37 16.12 Z" fill="#8c8c8c"/></svg>
<div class="st" style="left:2767px;top:1110.6px;font-size:23.4px;line-height:34px;color:#8f8f8f">换一换</div>
<div class="li" style="top:1177px">不同统计日期的支付买家数的占比</div>
<div class="li" style="top:1249px"><span style="letter-spacing:0.5px">2025-07</span>的支付金额</div>
<div class="li" style="top:1320.5px">支付买家数的年均值是多少</div>
<div class="li" style="top:1392.5px">各个卖家名称支付买家数和支付金额的趋势图</div>
<div class="st" style="left:1625px;top:1469.5px;font-size:25.2px;line-height:36px;font-weight:500;-webkit-text-stroke:0.55px #262626;color:#262626">收藏</div>
<div class="abs" style="left:2648px;top:1474.5px;width:25px;height:25px;border-radius:3.5px;background:#3370ff"></div>
<svg class="abs" style="left:2648px;top:1474.5px" width="25" height="25" viewBox="0 0 25 25"><path d="M6 12.6 L10.8 17.2 L19.4 8.2" fill="none" stroke="#fff" stroke-width="2.6"/></svg>
<div class="st" style="left:2686px;top:1474px;line-height:30px;color:#8f8f8f;font-size:21.2px">自动切换数据集</div>
<div class="li" style="top:1531px">无线端访客数的年均值是多少</div>

</body></html>
